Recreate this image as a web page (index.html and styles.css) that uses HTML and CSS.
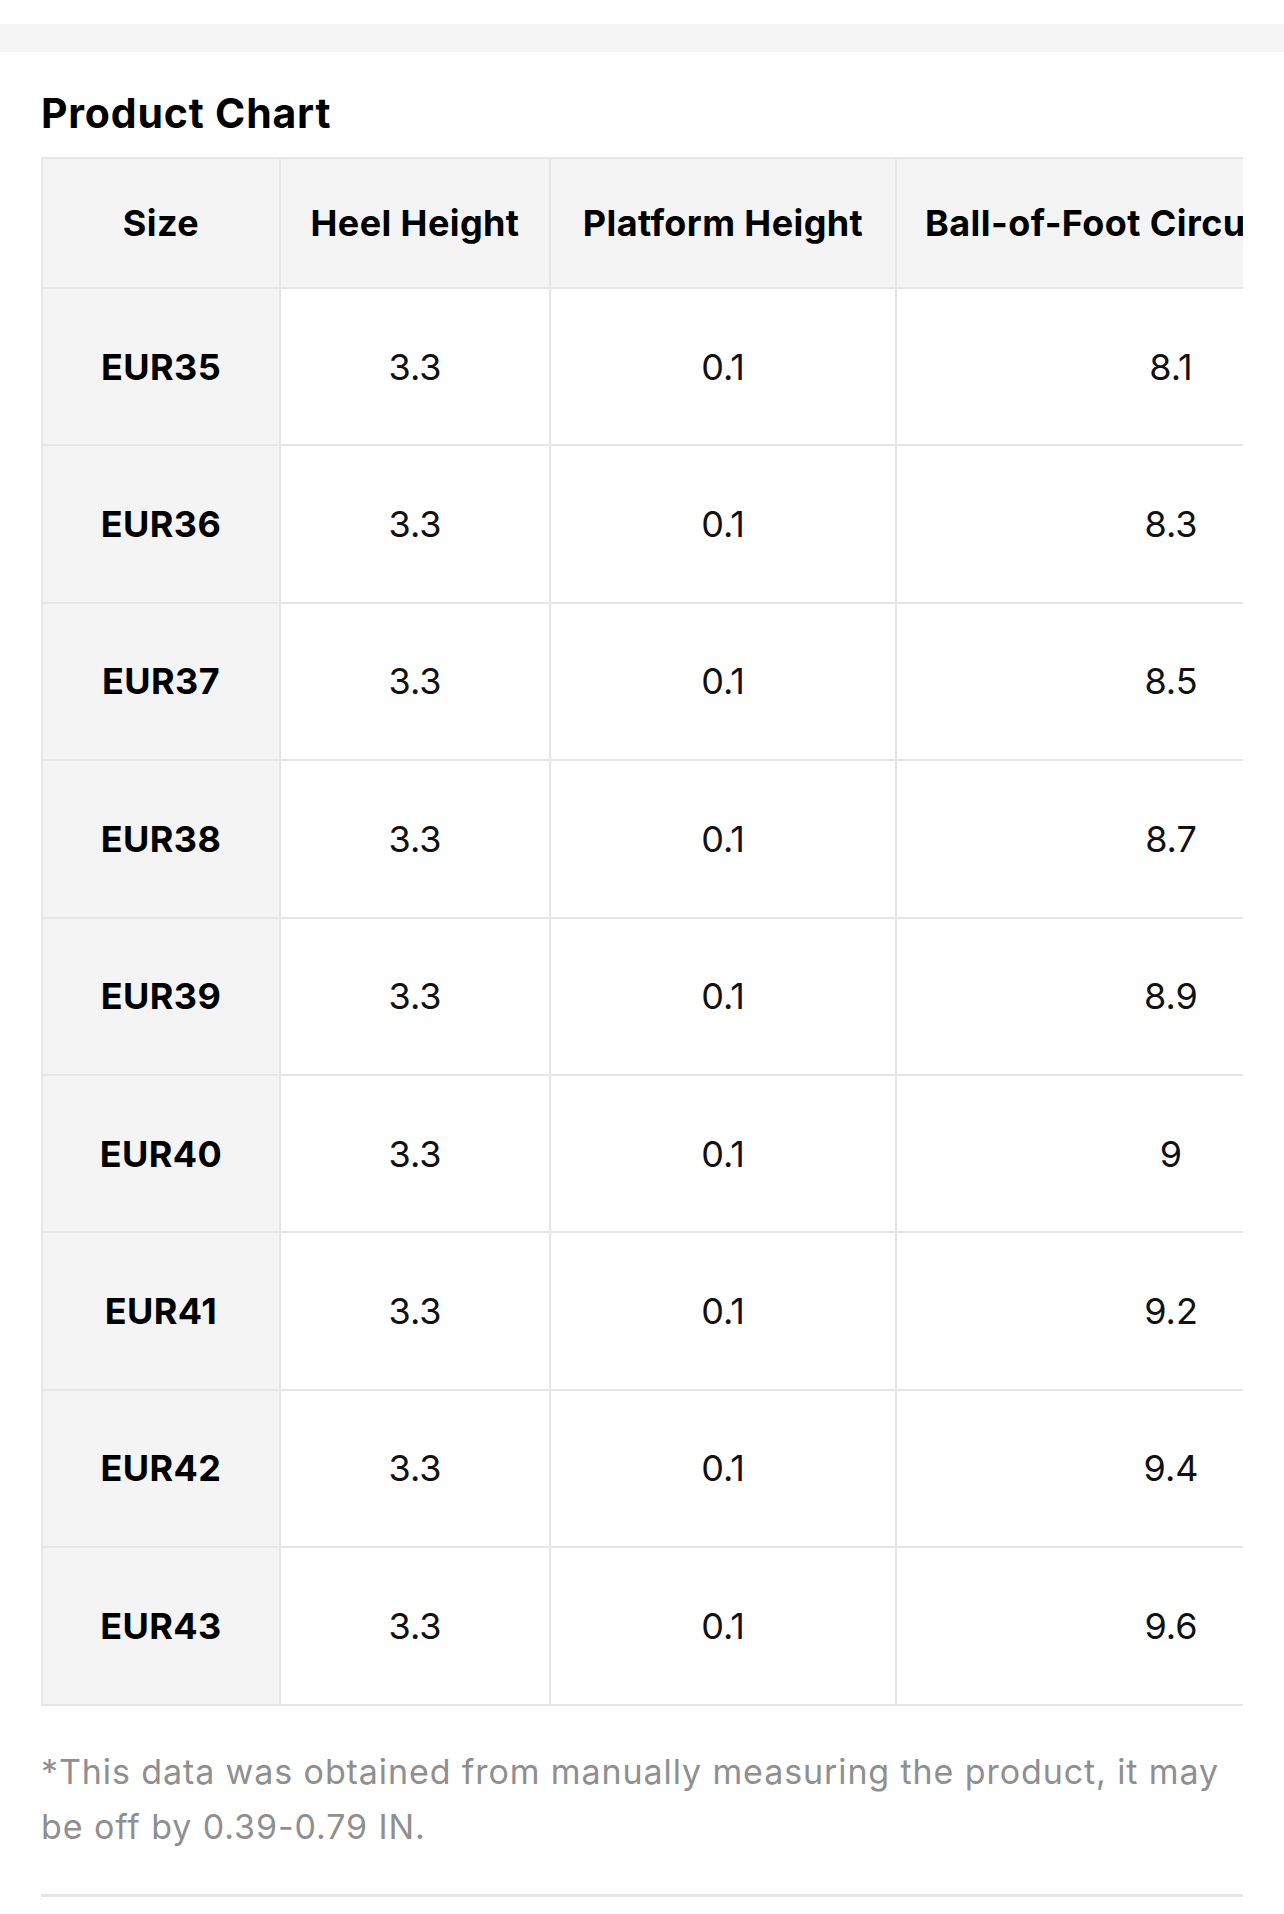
FILE: index.html
```html
<!DOCTYPE html>
<html>
<head>
<meta charset="utf-8">
<link rel="stylesheet" href="styles.css">
</head>
<body>
<div class="top-space"></div>
<div class="band"></div>
<section class="chart">
  <h2 class="title">Product Chart</h2>
  <div class="table-wrap">
    <table class="size-table">
      <colgroup>
        <col class="c1"><col class="c2"><col class="c3"><col class="c4">
      </colgroup>
      <thead>
        <tr><th>Size</th><th>Heel Height</th><th>Platform Height</th><th>Ball-of-Foot Circumference</th></tr>
      </thead>
      <tbody>
        <tr><th>EUR35</th><td>3.3</td><td>0.1</td><td>8.1</td></tr>
        <tr><th>EUR36</th><td>3.3</td><td>0.1</td><td>8.3</td></tr>
        <tr><th>EUR37</th><td>3.3</td><td>0.1</td><td>8.5</td></tr>
        <tr><th>EUR38</th><td>3.3</td><td>0.1</td><td>8.7</td></tr>
        <tr><th>EUR39</th><td>3.3</td><td>0.1</td><td>8.9</td></tr>
        <tr><th>EUR40</th><td>3.3</td><td>0.1</td><td>9</td></tr>
        <tr><th>EUR41</th><td>3.3</td><td>0.1</td><td>9.2</td></tr>
        <tr><th>EUR42</th><td>3.3</td><td>0.1</td><td>9.4</td></tr>
        <tr><th>EUR43</th><td>3.3</td><td>0.1</td><td>9.6</td></tr>
      </tbody>
    </table>
  </div>
  <p class="note">*This data was obtained from manually measuring the product, it may be off by 0.39-0.79 IN.</p>
  <div class="divider"></div>
</section>
</body>
</html>
```
FILE: styles.css
```css
html, body {
  margin: 0;
  padding: 0;
  background: #ffffff;
}
body {
  font-family: Inter, "Liberation Sans", sans-serif;
  color: #111111;
}
.top-space {
  height: 24px;
}
.band {
  height: 28px;
  background: #f5f5f5;
}
.chart {
  padding: 0 41px;
}
.title {
  margin: 0 0 19px;
  padding-top: 36px;
  font-size: 41px;
  line-height: 50px;
  font-weight: 700;
  letter-spacing: 0.8px;
  color: #000;
}
.table-wrap {
  overflow: hidden;
  width: 1202px;
}
.size-table {
  border-collapse: collapse;
  table-layout: fixed;
  width: 1404px;
}
.c1 { width: 238px; }
.c2 { width: 270px; }
.c3 { width: 346px; }
.c4 { width: 550px; }
.size-table th,
.size-table td {
  border: 2px solid #e6e6e6;
  text-align: center;
  padding: 0 22px;
  font-size: 36px;
  white-space: nowrap;
  color: #000;
}
.size-table thead th {
  height: 128px;
  background: #f4f4f4;
  font-weight: 700;
  letter-spacing: 0.4px;
}
.size-table tbody tr {
  height: 157.4px;
}
.size-table tbody th {
  background: #f4f4f4;
  font-weight: 700;
  letter-spacing: 0.4px;
}
.size-table tbody td {
  font-weight: 400;
  color: #111;
}
.note {
  margin: 0;
  padding-top: 38px;
  font-size: 34px;
  line-height: 55px;
  letter-spacing: 0.9px;
  color: #8f8f8f;
}
.divider {
  margin-top: 40px;
  height: 3px;
  background: #e6e6e6;
}
```
